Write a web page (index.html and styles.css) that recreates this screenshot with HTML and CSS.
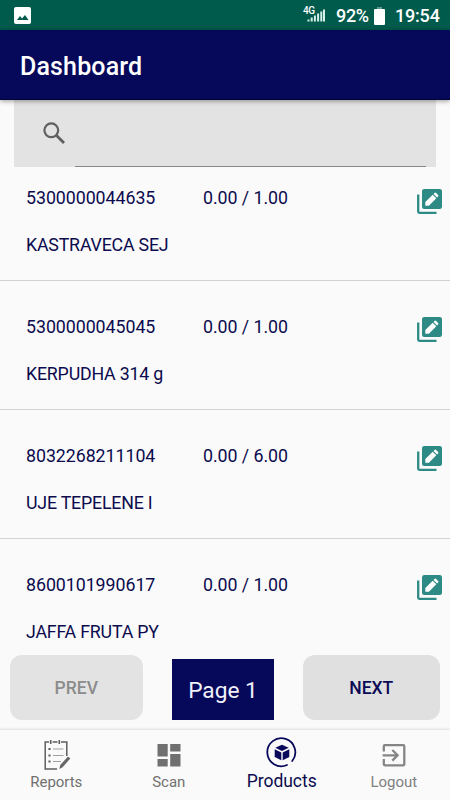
FILE: index.html
```html
<!DOCTYPE html>
<html lang="en">
<head>
<meta charset="utf-8">
<title>Dashboard</title>
<link rel="stylesheet" href="styles.css">
</head>
<body>
<svg class="defs" width="0" height="0" aria-hidden="true">
  <symbol id="edit" viewBox="0 0 25 25">
    <path d="M1.2 5.5V22.6Q1.2 23.8 2.4 23.8H19.5" fill="none" stroke="#2d8a85" stroke-width="2.3"/>
    <rect x="5" width="20" height="20" rx="2.3" fill="#2d8a85"/>
    <path d="M8.3 16.700V13.100L15.700 5.700 19.300 9.300 11.900 16.700ZM16.500 4.900l1-1q.8-.7 1.600 0l2 2q.7.8 0 1.600l-1 1Z" fill="#fff"/>
  </symbol>
</svg>
<div class="screen">
  <div class="status">
    <svg class="photo" viewBox="0 0 17 17"><rect width="17" height="17" rx="2" fill="#fff"/><path d="M3 13l3-4 2 2.5L11 8l3.500 5Z" fill="#005b4d"/></svg>
    <div class="signal"><span class="net">4G</span>
      <svg viewBox="0 0 18 13"><path d="M1.500 11v2M4.700 9v4M7.900 7v6M11.100 5v8M14.300 3v10M17 1v12" stroke="#d5eee8" stroke-width="2"/></svg>
    </div>
    <span class="percent">92%</span>
    <svg class="battery" viewBox="0 0 11 18"><path d="M3 0h5v2H3z" fill="#5c9a8e"/><rect y="2" width="11" height="16" rx="1" fill="#fff"/></svg>
    <span class="time">19:54</span>
  </div>
  <header class="appbar"><h1>Dashboard</h1></header>
  <main class="content">
    <div class="search">
      <svg viewBox="0 0 22 22"><circle cx="8.300" cy="8.300" r="6.900" fill="none" stroke="#606060" stroke-width="2.200"/><path d="M13.300 13.300L21 21" stroke="#606060" stroke-width="2.800"/></svg>
      <div class="field"></div>
    </div>
    <div class="list">
      <article class="row"><span class="code">5300000044635</span><span class="qty">0.00 / 1.00</span><svg class="edit"><use href="#edit"/></svg><span class="name">KASTRAVECA SEJ</span></article>
      <article class="row"><span class="code">5300000045045</span><span class="qty">0.00 / 1.00</span><svg class="edit"><use href="#edit"/></svg><span class="name">KERPUDHA 314 g</span></article>
      <article class="row"><span class="code">8032268211104</span><span class="qty">0.00 / 6.00</span><svg class="edit"><use href="#edit"/></svg><span class="name">UJE TEPELENE I</span></article>
      <article class="row"><span class="code">8600101990617</span><span class="qty">0.00 / 1.00</span><svg class="edit"><use href="#edit"/></svg><span class="name">JAFFA FRUTA PY</span></article>
    </div>
  </main>
  <div class="pager">
    <button class="btn prev" disabled>PREV</button>
    <span class="page">Page 1</span>
    <button class="btn next">NEXT</button>
  </div>
  <nav class="nav">
    <a class="tab"><svg viewBox="0 0 30 32">
      <path d="M8 3H4.200V30H16M11.500 3h5M20 3h5.800V17" fill="none" stroke="#5e5e5e" stroke-width="1.500"/>
      <path d="M9.700 1v4M18.300 1v4" stroke="#5e5e5e" stroke-width="1.600"/>
      <path d="M7.500 10h2M7.500 16.500h2M7.500 22.500h2" stroke="#555" stroke-width="2"/>
      <path d="M12 10h10.500M12 16.500h10.500M12 22.500h8" stroke="#a0a0a0" stroke-width="1"/>
      <path d="M18.300 30l1-4 7.700-8.500 2.300 2-7.700 8.700Z" fill="#666"/></svg><span>Reports</span></a>
    <a class="tab"><svg viewBox="0 0 30 32"><path d="M3.500 5H13.700V17.500H3.500ZM16.200 5H26.500V12.500H16.200ZM3.500 20H13.700V27.500H3.500ZM16.200 15H26.500V27.500H16.200Z" fill="#707070"/></svg><span>Scan</span></a>
    <a class="tab active"><svg viewBox="0 0 30 32">
      <path d="M25.200 23A14 14 0 1 0 20 27" fill="none" stroke="#08095a" stroke-width="1.800" stroke-linecap="round"/>
      <path d="M15 6.800L21.700 9.800 15 13 8.300 9.800ZM7.700 11.300L14.300 14.400V22.300L7.700 19ZM22.300 11.300L15.700 14.400V22.300L22.300 19Z" fill="#08095a"/></svg><span>Products</span></a>
    <a class="tab logout"><svg viewBox="0 0 30 32"><path d="M4.800 12.500V7.200Q4.800 6.200 5.800 6.200H24.300Q25.300 6.200 25.300 7.200V25.300Q25.300 26.300 24.300 26.300H5.800Q4.800 26.300 4.800 25.300V20M3.600 16.300H18M13.300 11l5.300 5.300-5.300 5.300" fill="none" stroke="#858585" stroke-width="2.300"/></svg><span>Logout</span></a>
  </nav>
</div>
</body>
</html>
```
FILE: styles.css
```css
* { box-sizing: border-box; }
body { margin: 0; font-family: Roboto, "Liberation Sans", sans-serif; }
.defs { position: absolute; }
.screen { width: 450px; height: 800px; overflow: hidden; display: flex; flex-direction: column; background: #fafafa; color: #0b0b4e; }
svg { display: block; flex: none; }
.status { height: 30px; flex: none; display: flex; align-items: center; padding: 1px 11px 0 14px; background: #005b4d; color: #fff; font-size: 18px; font-weight: 500; }
.photo { width: 17px; height: 17px; }
.signal { display: flex; flex-direction: column; width: 22px; margin-left: auto; margin-right: 11px; position: relative; height: 18px; justify-content: flex-end; }
.signal svg { width: 18px; height: 14px; align-self: flex-end; margin-bottom: 3px; }
.net { position: absolute; left: 0; top: -1px; font-size: 10px; line-height: 9px; letter-spacing: -.5px; background: #005b4d; }
.percent { width: 33px; white-space: nowrap; letter-spacing: -.3px; }
.battery { width: 11px; height: 18px; margin-left: 5px; }
.time { margin-left: 10px; width: 44px; white-space: nowrap; letter-spacing: -.2px; }
.appbar { height: 70px; flex: none; display: flex; align-items: center; padding: 3px 20px 0; background: #06085a; border-bottom: 1px solid #03043a; box-shadow: 0 1px 5px rgba(0,0,0,.4); position: relative; z-index: 1; color: #fff; }
h1 { margin: 0; font-size: 25px; font-weight: 500; letter-spacing: .15px; }
.content { flex: 1; min-height: 0; overflow: hidden; }
.search { height: 67px; margin: 0 14px; display: flex; background: #e3e3e3; padding: 22px 10px 0 29px; }
.search svg { width: 22px; height: 22px; }
.field { flex: 1; margin-left: 10px; height: 45px; border-bottom: 1px solid #888; }
.list { margin-top: -15px; }
.row { height: 128.850px; display: grid; grid-template-columns: 177px 1fr 25px; grid-template-rows: 47.400px 24px; padding: 34px 8px 0 26px; border-bottom: 1px solid #d2d2d2; font-size: 17.800px; line-height: 24px; }
.code, .qty { letter-spacing: -.05px; }
.edit { width: 25px; height: 25px; margin-top: 2.500px; }
.name { grid-column: 1 / 3; letter-spacing: -.2px; }
.pager { height: 90px; flex: none; display: flex; align-items: flex-start; padding: 16px 10px 0; margin-top: -16px; }
.btn { height: 65px; border: 0; border-radius: 12px; background: #e0e0e0; color: #0b0b55; font: 500 17.500px Roboto, sans-serif; padding: 0; }
.prev { width: 132.500px; background: #e3e3e3; color: #8c8c8c; }
.next { width: 137.500px; margin-left: auto; }
.page { width: 102px; height: 61px; margin: 4px 0 0 29.500px; background: #06085a; color: #f1f1fa; font-size: 22.700px; line-height: 63px; text-align: center; }
.nav { height: 71px; flex: none; display: grid; grid-template-columns: repeat(4, 1fr); border-top: 1px solid #e8e8e8; box-shadow: 0 -1px 2px rgba(0,0,0,.06); background: #fafafa; }
.tab { display: flex; flex-direction: column; align-items: center; padding-top: 9px; color: #707070; font-size: 15px; line-height: 20px; }
.tab svg { width: 30px; height: 32px; overflow: visible; }
.tab span { margin-top: 1px; letter-spacing: -.05px; }
.tab.active { padding-top: 8px; padding-left: 1px; color: #0b0b4e; font-size: 17.500px; }
.logout { color: #808080; }
```
